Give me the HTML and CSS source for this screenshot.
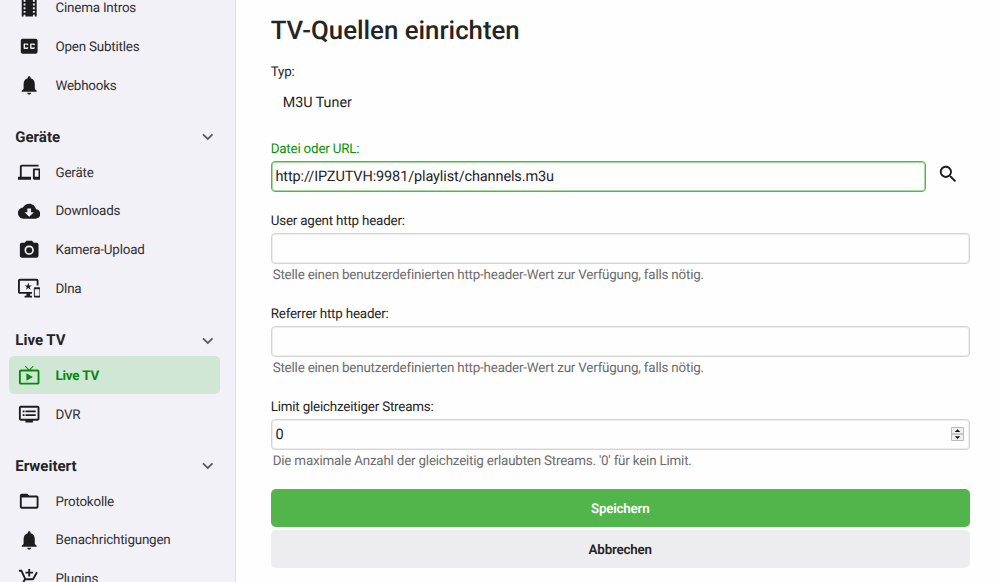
FILE: index.html
```html
<!DOCTYPE html>
<html lang="de">
<head>
<meta charset="utf-8">
<title>TV-Quellen einrichten</title>
<link rel="stylesheet" href="styles.css">
</head>
<body>
<div class="app">
<nav class="sidebar">
  <a class="item"><svg class="icon" viewBox="0 0 24 24"><path d="M18 3v2h-2V3H8v2H6V3H4v18h2v-2h2v2h8v-2h2v2h2V3h-2zM8 17H6v-2h2v2zm0-4H6v-2h2v2zm0-4H6V7h2v2zm10 8h-2v-2h2v2zm0-4h-2v-2h2v2zm0-4h-2V7h2v2z"/></svg><span>Cinema Intros</span></a>
  <a class="item"><svg class="icon" viewBox="0 0 24 24"><path d="M19 4H5c-1.11 0-2 .9-2 2v12c0 1.1.89 2 2 2h14c1.1 0 2-.9 2-2V6c0-1.1-.9-2-2-2zm-8 7H9.500v-.5h-2v3h2V13H11v1c0 .55-.45 1-1 1H7c-.55 0-1-.45-1-1v-4c0-.55.45-1 1-1h3c.55 0 1 .45 1 1v1zm7 0h-1.500v-.5h-2v3h2V13H18v1c0 .55-.45 1-1 1h-3c-.55 0-1-.45-1-1v-4c0-.55.45-1 1-1h3c.55 0 1 .45 1 1v1z"/></svg><span>Open Subtitles</span></a>
  <a class="item"><svg class="icon" viewBox="0 0 24 24"><path d="M12 22c1.100 0 2-.9 2-2h-4c0 1.100.9 2 2 2zm6-6v-5c0-3.070-1.640-5.640-4.500-6.320V4c0-.83-.67-1.500-1.500-1.500s-1.500.67-1.500 1.500v.68C7.630 5.360 6 7.920 6 11v5l-2 2v1h16v-1l-2-2z"/></svg><span>Webhooks</span></a>
  <div class="group"><span>Geräte</span><svg class="chevron" viewBox="0 0 24 24"><path d="M7.410 8.590 12 13.170l4.590-4.580L18 10l-6 6-6-6z"/></svg></div>
  <a class="item"><svg class="icon" viewBox="0 0 24 24"><path d="M4 6h18V4H4c-1.100 0-2 .9-2 2v11H0v3h14v-3H4V6zm19 2h-6c-.55 0-1 .45-1 1v10c0 .55.45 1 1 1h6c.55 0 1-.45 1-1V9c0-.55-.45-1-1-1zm-1 9h-4v-7h4v7z"/></svg><span>Geräte</span></a>
  <a class="item"><svg class="icon" viewBox="0 0 24 24"><path d="M19.350 10.040C18.670 6.590 15.640 4 12 4 9.110 4 6.600 5.640 5.350 8.040 2.340 8.360 0 10.910 0 14c0 3.310 2.690 6 6 6h13c2.760 0 5-2.240 5-5 0-2.640-2.050-4.780-4.650-4.960zM17 13l-5 5-5-5h3V9h4v4h3z"/></svg><span>Downloads</span></a>
  <a class="item"><svg class="icon" viewBox="0 0 24 24"><circle cx="12" cy="12" r="3.200"/><path d="M9 2 7.170 4H4c-1.100 0-2 .9-2 2v12c0 1.100.9 2 2 2h16c1.100 0 2-.9 2-2V6c0-1.100-.9-2-2-2h-3.170L15 2H9zm3 15c-2.760 0-5-2.240-5-5s2.240-5 5-5 5 2.240 5 5-2.240 5-5 5z"/></svg><span>Kamera-Upload</span></a>
  <a class="item"><svg class="icon" viewBox="0 0 24 24"><path d="M23 11.010 18 11c-.55 0-1 .45-1 1v9c0 .55.45 1 1 1h5c.55 0 1-.45 1-1v-9c0-.55-.45-.99-1-.99zM23 20h-5v-7h5v7zM20 2H2C.89 2 0 2.890 0 4v12c0 1.100.89 2 2 2h7v2H7v2h8v-2h-2v-2h2v-2H2V4h18v5h2V4c0-1.110-.9-2-2-2zm-8.030 7L11 6l-.97 3H7l2.470 1.760-.94 2.910 2.470-1.800 2.470 1.800-.94-2.910L15 9h-3.030z"/></svg><span>Dlna</span></a>
  <div class="group"><span>Live TV</span><svg class="chevron" viewBox="0 0 24 24"><path d="M7.410 8.590 12 13.170l4.590-4.580L18 10l-6 6-6-6z"/></svg></div>
  <a class="item active"><svg class="icon" viewBox="0 0 24 24"><path d="M21 6h-7.590l3.290-3.290L16 2l-4 4-4-4-.7.710L10.590 6H3c-1.100 0-2 .89-2 2v12c0 1.100.9 2 2 2h18c1.100 0 2-.9 2-2V8c0-1.110-.9-2-2-2zm0 14H3V8h18v12zM9 10v8l7-4z"/></svg><span>Live TV</span></a>
  <a class="item"><svg class="icon" viewBox="0 0 24 24"><path d="M21 3H3c-1.100 0-2 .9-2 2v12c0 1.100.9 2 2 2h5v2h8v-2h5c1.100 0 1.990-.9 1.990-2L23 5c0-1.100-.9-2-2-2zm0 14H3V5h18v12zm-2-9H8v2h11V8zm0 4H8v2h11v-2zM7 8H5v2h2V8zm0 4H5v2h2v-2z"/></svg><span>DVR</span></a>
  <div class="group"><span>Erweitert</span><svg class="chevron" viewBox="0 0 24 24"><path d="M7.410 8.590 12 13.170l4.590-4.580L18 10l-6 6-6-6z"/></svg></div>
  <a class="item"><svg class="icon" viewBox="0 0 24 24"><path d="M20 6h-8l-2-2H4c-1.100 0-1.990.9-1.990 2L2 18c0 1.100.9 2 2 2h16c1.100 0 2-.9 2-2V8c0-1.100-.9-2-2-2zm0 12H4V8h16v10z"/></svg><span>Protokolle</span></a>
  <a class="item"><svg class="icon" viewBox="0 0 24 24"><path d="M12 22c1.100 0 2-.9 2-2h-4c0 1.100.9 2 2 2zm6-6v-5c0-3.070-1.640-5.640-4.500-6.320V4c0-.83-.67-1.500-1.500-1.500s-1.500.67-1.500 1.500v.68C7.630 5.360 6 7.920 6 11v5l-2 2v1h16v-1l-2-2z"/></svg><span>Benachrichtigungen</span></a>
  <a class="item"><svg class="icon" viewBox="0 0 24 24"><path d="M11 9h2V6h3V4h-3V1h-2v3H8v2h3v3zm-4 9c-1.100 0-1.990.9-1.990 2S5.900 22 7 22s2-.9 2-2-.9-2-2-2zm10 0c-1.100 0-1.990.9-1.990 2s.89 2 1.990 2 2-.9 2-2-.9-2-2-2zm-8.900-5h7.450c.75 0 1.410-.41 1.750-1.030L21.160 4.960 19.420 4l-3.870 7H8.530L4.270 2H1v2h2l3.600 7.590-1.350 2.440C4.520 15.370 5.480 17 7 17h12v-2H7l1.100-2z"/></svg><span>Plugins</span></a>
</nav>
<main class="content">
  <h1 class="title">TV-Quellen einrichten</h1>
  <div class="label">Typ:</div>
  <div class="type">M3U Tuner</div>
  <div class="field url">
    <div class="label focused">Datei oder URL:</div>
    <div class="row">
      <div class="input focused">http://IPZUTVH:9981/playlist/channels.m3u</div>
      <svg class="search" viewBox="0 0 24 24"><path d="M15.500 14h-.79l-.28-.27C15.410 12.590 16 11.110 16 9.500 16 5.910 13.090 3 9.500 3S3 5.910 3 9.500 5.910 16 9.500 16c1.610 0 3.090-.59 4.230-1.570l.27.28v.79l5 4.990L20.490 19l-4.990-5zm-6 0C7.010 14 5 11.990 5 9.500S7.010 5 9.500 5 14 7.010 14 9.500 11.990 14 9.500 14z"/></svg>
    </div>
  </div>
  <div class="field">
    <div class="label">User agent http header:</div>
    <div class="input"></div>
    <div class="help">Stelle einen benutzerdefinierten http-header-Wert zur Verfügung, falls nötig.</div>
  </div>
  <div class="field">
    <div class="label">Referrer http header:</div>
    <div class="input"></div>
    <div class="help">Stelle einen benutzerdefinierten http-header-Wert zur Verfügung, falls nötig.</div>
  </div>
  <div class="field">
    <div class="label">Limit gleichzeitiger Streams:</div>
    <div class="input">0<svg class="spinner" viewBox="0 0 13 14"><path class="spin-box" d="M.5.500h12v6.500H.5zM.5 7h12v6.500H.5z"/><path d="M3.800 4.900 6.500 2.200l2.700 2.700zM3.800 9.200h5.400l-2.700 2.700z"/></svg></div>
    <div class="help">Die maximale Anzahl der gleichzeitig erlaubten Streams. '0' für kein Limit.</div>
  </div>
  <div class="button primary">Speichern</div>
  <div class="button">Abbrechen</div>
</main>
</div>
</body>
</html>
```
FILE: styles.css
```css
* { box-sizing: border-box; }
body {
  margin: 0;
  background: #fefefe;
  color: #242424;
  font-family: Roboto, "Liberation Sans", sans-serif;
  font-size: 13.400px;
  letter-spacing: -.2px;
  text-rendering: geometricPrecision;
}
.app { display: flex; height: 582px; overflow: hidden; }
.sidebar {
  flex: none;
  width: 235.500px;
  padding: 0 15px 0 9.300px;
  background: #f2f1f7;
  border-right: 1.500px solid #dedee3;
}
.item {
  display: flex;
  align-items: center;
  height: 38px;
  margin-bottom: .8px;
  padding-left: 8.800px;
  gap: 15px;
  border-radius: 5px;
  color: #303033;
}
.item span { padding-top: 2px; }
.item:first-child { margin-top: -11.300px; }
.icon { width: 22.400px; height: 22.400px; fill: #1d1d1f; }
.item.active { background: #d1e7d5; color: #078a0b; font-weight: 700; }
.item.active .icon { fill: #078a0b; }
.group {
  display: flex;
  align-items: center;
  justify-content: space-between;
  height: 48.100px;
  padding: 16px 2px 0 6px;
  font-size: 15px;
  font-weight: 700;
  letter-spacing: 0;
}
.chevron { width: 21.500px; height: 21.500px; margin-right: -1.200px; fill: #59595c; }
.content { flex: 1; padding: 13px 30.300px 0 35.200px; }
.title {
  margin: 0;
  padding-top: 1px;
  font-size: 25.800px;
  font-weight: 500;
  letter-spacing: 0;
  line-height: 34px;
}
.title + .label { margin-top: 13.500px; }
.label { padding-top: 1.600px; line-height: 20px; }
.label.focused { color: #0b910b; }
.type {
  margin: 10px 0 25.600px;
  padding-left: 12px;
  font-size: 14.300px;
  letter-spacing: 0;
  line-height: 20px;
}
.field { margin-bottom: 17px; }
.field.url { margin-bottom: 18.200px; }
.row { display: flex; }
.input {
  display: flex;
  align-items: center;
  justify-content: space-between;
  height: 31px;
  margin-top: .9px;
  padding: 0 4.500px 0 3.800px;
  border: 1px solid #d4d4d4;
  border-radius: 4px;
  box-shadow: inset 0 0 0 1px #ededed;
  font-size: 14.500px;
  letter-spacing: -.12px;
}
.row .input { flex: 1; }
.input.focused { border-color: #52b54b; box-shadow: inset 0 0 0 1px #a9daa5; }
.search { flex: none; width: 22.400px; height: 22.400px; margin: 3.200px 10.700px 0 10.800px; fill: #1d1d1f; }
.spinner { width: 13px; height: 14px; fill: #111; }
.spin-box { fill: #efefef; stroke: #bbb; }
.help { padding: 2px 0 0 2px; line-height: 20px; margin-top: .5px; color: #6c6c6c; }
.button {
  height: 38px;
  margin-bottom: 3px;
  padding-top: 1.300px;
  border-radius: 5px;
  background: #ededef;
  font-weight: 600;
  line-height: 38px;
  text-align: center;
}
.button.primary { background: #52b54b; color: #fff; }
```
